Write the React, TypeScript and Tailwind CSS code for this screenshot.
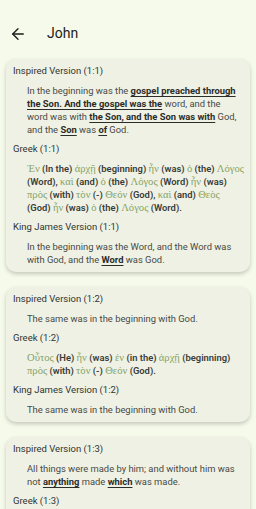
import React from 'react';
import { ArrowLeft } from 'lucide-react';

type Part = { t: string; b?: boolean };
type Gloss = { g: string; e: string; p?: string };

const sans = { fontFamily: 'Roboto, "Liberation Sans", sans-serif' };

function Heading({ children }: { children: React.ReactNode }) {
  return <div className="text-[9.5px] leading-[13px] text-[#313431]">{children}</div>;
}

function Plain({ parts }: { parts: Part[] }) {
  return (
    <p className="mt-[7px] mb-[6px] last:mb-0 pl-[14px] pr-[3px] text-[9.4px] leading-[13px] text-[#474a46]">
      {parts.map((p, i) =>
        p.b ? (
          <b key={i} className="font-bold text-[#2b2d2a] underline underline-offset-[1.5px] decoration-[0.8px]">
            {p.t}
          </b>
        ) : (
          <span key={i}>{p.t}</span>
        ),
      )}
    </p>
  );
}

function Greek({ words }: { words: Gloss[] }) {
  return (
    <p className="mt-[7px] mb-[6px] last:mb-0 pl-[14px] text-[9.4px] leading-[13px] text-[#3a3d39]">
      {words.map((w, i) => (
        <React.Fragment key={i}>
          <span className="text-[#86a366] text-[10.6px]" style={{ fontFamily: '"Liberation Serif", "DejaVu Serif", serif' }}>
            {w.g}
          </span>{' '}
          <span className="font-semibold">({w.e}){w.p ?? ''}</span>
          {i < words.length - 1 ? ' ' : ''}
        </React.Fragment>
      ))}
    </p>
  );
}

function Card({ children }: { children: React.ReactNode }) {
  return (
    <div className="mx-[6px] mb-[15px] rounded-[10px] bg-[#eff1e4] pl-[7px] pr-[5px] pt-[5px] pb-[6px] shadow-[0_2px_4px_rgba(0,0,0,0.2)]">
      {children}
    </div>
  );
}

export default function App() {
  return (
    <div className="h-[509px] w-[256px] overflow-hidden bg-[#f5faea]" style={sans}>
      <div className="flex h-[59px] items-center pt-[8px] pl-[9px]">
        <ArrowLeft className="h-[18px] w-[18px] text-[#1c1d1a]" strokeWidth={1.8} />
        <span className="ml-[20px] text-[14px] text-[#1c1d1a]">John</span>
      </div>

      <Card>
        <Heading>Inspired Version (1:1)</Heading>
        <Plain
          parts={[
            { t: 'In the beginning was the ' },
            { t: 'gospel preached through the Son. And the gospel was the', b: true },
            { t: ' word, and the word was with ' },
            { t: 'the Son, and the Son was with', b: true },
            { t: ' God, and the ' },
            { t: 'Son', b: true },
            { t: ' was ' },
            { t: 'of', b: true },
            { t: ' God.' },
          ]}
        />
        <Heading>Greek (1:1)</Heading>
        <Greek
          words={[
            { g: 'Ἐν', e: 'In the' },
            { g: 'ἀρχῇ', e: 'beginning' },
            { g: 'ἦν', e: 'was' },
            { g: 'ὁ', e: 'the' },
            { g: 'Λόγος', e: 'Word', p: ',' },
            { g: 'καὶ', e: 'and' },
            { g: 'ὁ', e: 'the' },
            { g: 'Λόγος', e: 'Word' },
            { g: 'ἦν', e: 'was' },
            { g: 'πρὸς', e: 'with' },
            { g: 'τὸν', e: '-' },
            { g: 'Θεόν', e: 'God', p: ',' },
            { g: 'καὶ', e: 'and' },
            { g: 'Θεὸς', e: 'God' },
            { g: 'ἦν', e: 'was' },
            { g: 'ὁ', e: 'the' },
            { g: 'Λόγος', e: 'Word', p: '.' },
          ]}
        />
        <Heading>King James Version (1:1)</Heading>
        <Plain
          parts={[
            { t: 'In the beginning was the Word, and the Word was with God, and the ' },
            { t: 'Word', b: true },
            { t: ' was God.' },
          ]}
        />
      </Card>

      <Card>
        <Heading>Inspired Version (1:2)</Heading>
        <Plain parts={[{ t: 'The same was in the beginning with God.' }]} />
        <Heading>Greek (1:2)</Heading>
        <Greek
          words={[
            { g: 'Οὗτος', e: 'He' },
            { g: 'ἦν', e: 'was' },
            { g: 'ἐν', e: 'in the' },
            { g: 'ἀρχῇ', e: 'beginning' },
            { g: 'πρὸς', e: 'with' },
            { g: 'τὸν', e: '-' },
            { g: 'Θεόν', e: 'God', p: '.' },
          ]}
        />
        <Heading>King James Version (1:2)</Heading>
        <Plain parts={[{ t: 'The same was in the beginning with God.' }]} />
      </Card>

      <Card>
        <Heading>Inspired Version (1:3)</Heading>
        <Plain
          parts={[
            { t: 'All things were made by him; and without him was not ' },
            { t: 'anything', b: true },
            { t: ' made ' },
            { t: 'which', b: true },
            { t: ' was made.' },
          ]}
        />
        <Heading>Greek (1:3)</Heading>
        <Greek
          words={[
            { g: 'πάντα', e: 'All things' },
            { g: 'δι᾽', e: 'through' },
            { g: 'αὐτοῦ', e: 'Him' },
            { g: 'ἐγένετο', e: 'came into being', p: ',' },
          ]}
        />
      </Card>
    </div>
  );
}
